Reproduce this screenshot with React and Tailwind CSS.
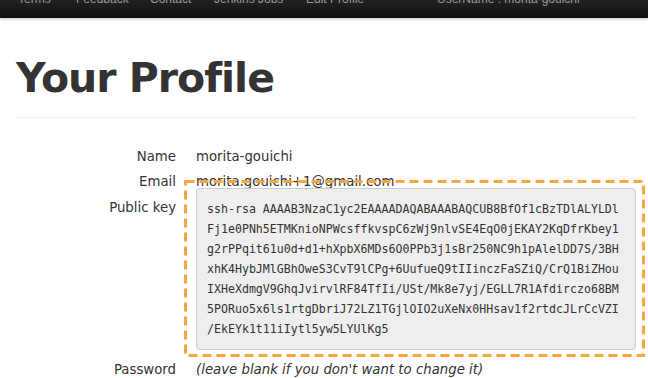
import React from "react";

const navItems = [
  { label: "Terms", w: "w-[58px]" },
  { label: "Feedback", w: "w-[74px]" },
  { label: "Contact", w: "w-[64px]" },
  { label: "Jenkins Jobs", w: "w-[92px]" },
  { label: "Edit Profile", w: "w-[131px]" },
];

const keyLines = [
  "ssh-rsa AAAAB3NzaC1yc2EAAAADAQABAAABAQCUB8BfOf1cBzTDlALYLDl",
  "Fj1e0PNh5ETMKnioNPWcsffkvspC6zWj9nlvSE4EqO0jEKAY2KqDfrKbey1",
  "g2rPPqit61u0d+d1+hXpbX6MDs6O0PPb3j1sBr250NC9h1pAlelDD7S/3BH",
  "xhK4HybJMlGBhOweS3CvT9lCPg+6UufueQ9tIIinczFaSZiQ/CrQ1BiZHou",
  "IXHeXdmgV9GhqJvirvlRF84TfIi/USt/Mk8e7yj/EGLL7R1Afdirczo68BM",
  "5PORuo5x6ls1rtgDbriJ72LZ1TGjlOIO2uXeNx0HHsav1f2rtdcJLrCcVZI",
  "/EkEYk1t11iIytl5yw5LYUlKg5",
];

function Row({ label, children, className = "", labelClass = "" }) {
  return (
    <div className={`flex ${className}`}>
      <div className={`w-[160px] shrink-0 text-right leading-[20px] ${labelClass}`}>{label}</div>
      <div className="ml-[20px] leading-[20px]">{children}</div>
    </div>
  );
}

export default function App() {
  return (
    <div className="w-[648px] h-[378px] overflow-hidden bg-white text-[#333] font-['DejaVu_Sans',sans-serif] text-[13.3px]">
      {/* top navbar, scrolled mostly out of view */}
      <div className="h-[18px] bg-gradient-to-b from-[#222] to-[#111] shadow-[0_1px_3px_rgba(0,0,0,0.25)] overflow-hidden">
        <div className="-mt-[9px] flex whitespace-nowrap pl-[18px] font-['Liberation_Sans',sans-serif] text-[12px] leading-[16px] text-[#999]">
          {navItems.map((n) => (
            <span key={n.label} className={`${n.w} shrink-0`}>{n.label}</span>
          ))}
          <span className="shrink-0">UserName : morita-gouichi</span>
        </div>
      </div>

      <div className="pl-[16px] pr-[12px]">
        <div className="mt-[40px] border-b border-[#eee] pb-[18px]">
          <h1 className="font-bold text-[41px] leading-[41px] tracking-[-1px] text-[#333]">Your Profile</h1>
        </div>

        <div className="mt-[29px] flex flex-col">
          <Row label="Name">morita-gouichi</Row>
          <Row label="Email" className="mt-[5px]">morita.gouichi+1@gmail.com</Row>
          <Row label="Public key" className="-mt-[4px]" labelClass="pt-[10px]">
            <div className="relative">
              <div className="w-[440px] h-[162px] rounded-[4px] border border-[#ccc] bg-[#eee] px-[10px] py-[10px] font-['DejaVu_Sans_Mono',monospace] text-[11.6px] leading-[20px] text-[#333] whitespace-pre">
                {keyLines.map((l, i) => (
                  <div key={i}>{l}</div>
                ))}
              </div>
              <svg
                className="absolute left-[-12px] top-[-8px] pointer-events-none"
                width="461"
                height="177"
                viewBox="0 0 461 177"
              >
                <rect
                  x="1.5"
                  y="1.5"
                  width="458"
                  height="174"
                  fill="none"
                  stroke="#f8a63e"
                  strokeWidth="3"
                  strokeDasharray="9 5"
                />
              </svg>
            </div>
          </Row>
          <Row label="Password" className="mt-[10px]">
            <span className="italic">(leave blank if you don't want to change it)</span>
          </Row>
        </div>
      </div>
    </div>
  );
}
